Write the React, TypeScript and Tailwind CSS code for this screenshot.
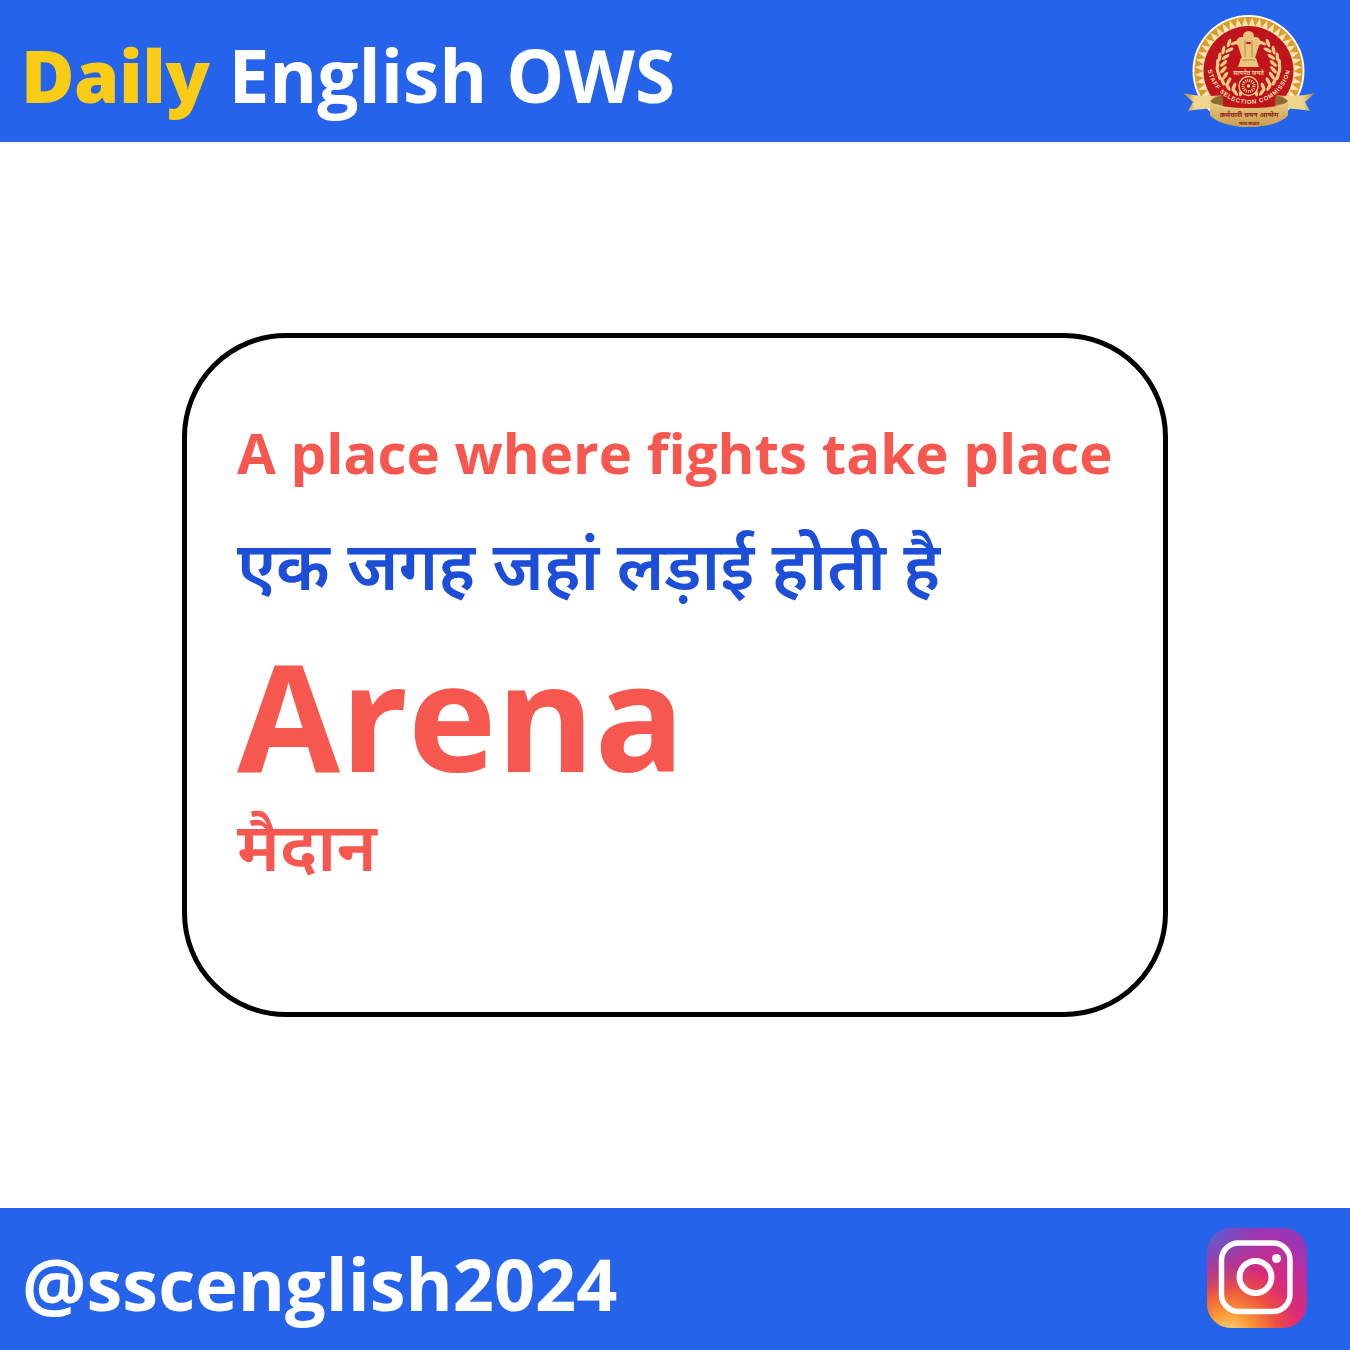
const wreathPoints = Array.from({ length: 9 }, (_, i) => {
  // bezier from chakra side up to the tip of the branch
  const t = i / 8;
  const u = 1 - t;
  const x = u * u * 68 + 2 * u * t * 36 + t * t * 62;
  const y = u * u * 92 + 2 * u * t * 72 + t * t * 43;
  return { x, y, a: -12 + t * 55 - 24 };
});

const Logo = () => {
  const teeth = Array.from({ length: 44 }, (_, i) => (i * 360) / 44);
  const mirror = (x: number) => 157 - x;
  return (
    <svg width="134" height="118" viewBox="12 12 134 118">
      <defs>
        <linearGradient id="gold" x1="0" x2="1" y1="0" y2="0">
          <stop offset="0" stopColor="#a87f36" />
          <stop offset="0.3" stopColor="#f0d58e" />
          <stop offset="0.7" stopColor="#f0d58e" />
          <stop offset="1" stopColor="#a87f36" />
        </linearGradient>
        <linearGradient id="band" x1="0" x2="0" y1="0" y2="1">
          <stop offset="0" stopColor="#e9cc85" />
          <stop offset="1" stopColor="#c99b4c" />
        </linearGradient>
        <path id="arc" d="M37 62 A42 42 0 0 0 121 62" fill="none" />
      </defs>
      <circle cx="78.500" cy="71" r="56" fill="#fff" />
      <circle cx="78.500" cy="71" r="54" fill="#f8e6b8" />
      {teeth.map((a) => (
        <polygon key={a} points="74.500,17 82.500,17 78.500,26" fill="#dc9c2a" transform={`rotate(${a} 78.500 71)`} />
      ))}
      <circle cx="78.500" cy="71" r="45" fill="#c0141c" />
      {/* lion capital */}
      <g fill="#ecc57c">
        <circle cx="78.500" cy="36.500" r="5.500" />
        <circle cx="71.500" cy="42" r="5" />
        <circle cx="85.500" cy="42" r="5" />
        <path d="M67.500 44h22l-4.500 14h-13z" />
        <path d="M71 58h15l3 9H68z" />
      </g>
      <path d="M75 40v17M82 40v17M72 60h13" stroke="#b98a45" strokeWidth="1" fill="none" />
      <text x="78.500" y="74.500" textAnchor="middle" fontSize="6" fontWeight="600" fill="#f2d89a" fontFamily="'Noto Sans Devanagari','Noto Sans',sans-serif">सत्यमेव जयते</text>
      {/* wreath */}
      {wreathPoints.map((p, i) => (
        <g key={i} fill="#f0cd84">
          <ellipse cx={p.x - 3} cy={p.y} rx="1.700" ry="4.500" transform={`rotate(${p.a} ${p.x - 3} ${p.y})`} />
          <ellipse cx={p.x + 3} cy={p.y} rx="1.700" ry="4.500" transform={`rotate(${p.a + 50} ${p.x + 3} ${p.y})`} />
          <ellipse cx={mirror(p.x - 3)} cy={p.y} rx="1.700" ry="4.500" transform={`rotate(${-p.a} ${mirror(p.x - 3)} ${p.y})`} />
          <ellipse cx={mirror(p.x + 3)} cy={p.y} rx="1.700" ry="4.500" transform={`rotate(${-p.a - 50} ${mirror(p.x + 3)} ${p.y})`} />
        </g>
      ))}
      {/* chakra */}
      <circle cx="78.500" cy="86" r="9.500" fill="#b3141a" stroke="#f0cd84" strokeWidth="1.300" />
      <circle cx="78.500" cy="86" r="5.500" fill="none" stroke="#f0cd84" strokeWidth="3" strokeDasharray="1 1" />
      <circle cx="78.500" cy="86" r="1.800" fill="#f0cd84" />
      <text fontSize="6" fontWeight="700" fill="#f6e3ae" letterSpacing="0.75" fontFamily="'Liberation Sans',sans-serif">
        <textPath href="#arc" startOffset="50%" textAnchor="middle">STAFF SELECTION COMMISSION</textPath>
      </text>
      {/* ribbon */}
      <path d="M13 93c12 3 26 4 39 2l1 11c-12 3-25 3-35 5l5-9z" fill="url(#gold)" />
      <path d="M145 93c-12 3-26 4-39 2l-1 11c12 3 25 3 35 5l-5-9z" fill="url(#gold)" />
      <path d="M40 101c8 6 22 7 39 7s31-1 39-7v14c-6 8-22 12-39 12s-33-4-39-12z" fill="url(#band)" />
      <path d="M40 101c3-3 8-5 12-6l1 10c-6-1-9 0-13-4zM118 101c-3-3-8-5-12-6l-1 10c6-1 9 0 13-4z" fill="#8e6a2c" />
      <text x="79" y="117" textAnchor="middle" fontSize="7" fontWeight="700" fill="#8f1a1a" fontFamily="'Noto Sans Devanagari','Noto Sans',sans-serif">कर्मचारी चयन आयोग</text>
      <text x="79" y="124.500" textAnchor="middle" fontSize="4" fontWeight="700" fill="#7a1b1b" fontFamily="'Noto Sans Devanagari','Noto Sans',sans-serif">भारत सरकार</text>
    </svg>
  );
};

const InstagramIcon = () => (
  <svg width="100" height="100" viewBox="0 0 100 100">
    <defs>
      <radialGradient id="ig1" cx="0.22" cy="1.08" r="1.15">
        <stop offset="0" stopColor="#fde08a" />
        <stop offset="0.2" stopColor="#fb9a34" />
        <stop offset="0.42" stopColor="#ee5040" />
        <stop offset="0.62" stopColor="#dc2a78" />
        <stop offset="0.85" stopColor="#bb2f9e" />
        <stop offset="1" stopColor="#9a35b5" />
      </radialGradient>
      <radialGradient id="ig2" cx="0" cy="0" r="0.7">
        <stop offset="0" stopColor="#4f68d8" />
        <stop offset="1" stopColor="#7a3ac0" stopOpacity="0" />
      </radialGradient>
    </defs>
    <rect width="100" height="100" rx="24" fill="url(#ig1)" />
    <rect width="100" height="100" rx="24" fill="url(#ig2)" />
    <rect x="14.500" y="15" width="68.500" height="68.500" rx="17" fill="none" stroke="#fff" strokeWidth="5.500" />
    <circle cx="48.500" cy="49" r="16" fill="none" stroke="#fff" strokeWidth="6" />
    <circle cx="69.500" cy="30.500" r="4.500" fill="#fff" />
  </svg>
);

export default function App() {
  return (
    <div className="h-[1350px] w-[1350px] flex flex-col bg-white font-bold font-['Open_Sans','Noto_Sans','Noto_Sans_Devanagari',sans-serif]">
      <header className="h-[142px] bg-[#2563eb] flex items-center justify-between pl-[21px] pr-[34px]">
        <h1 className="text-[73px] leading-none text-white pt-[6px] whitespace-nowrap">
          <span className="text-[#facc15] font-extrabold tracking-[-0.5px]">Daily</span> English OWS
        </h1>
        <Logo />
      </header>

      <main className="flex-1 flex items-center justify-center">
        <div className="w-[986px] h-[684px] border-[5px] border-black rounded-[104px] px-[50px] pt-[77px]">
          <p className="text-[56.400px] leading-[76px] text-[#f6574e] whitespace-nowrap">A place where fights take place</p>
          <p className="text-[66.700px] leading-[88px] mt-[30px] text-[#1d4ed8] font-semibold whitespace-nowrap">एक जगह जहां लड़ाई होती है</p>
          <p className="text-[149.500px] leading-[170px] mt-[20px] text-[#f6574e]">Arena</p>
          <p className="text-[68px] leading-[88px] mt-[2px] text-[#f6574e] font-semibold">मैदान</p>
        </div>
      </main>

      <footer className="h-[142px] bg-[#2563eb] flex items-center justify-between pl-[22px] pr-[43px]">
        <span className="text-[72px] leading-none text-white pt-[8px]">@sscenglish2024</span>
        <div className="-mt-[2px]">
          <InstagramIcon />
        </div>
      </footer>
    </div>
  );
}
